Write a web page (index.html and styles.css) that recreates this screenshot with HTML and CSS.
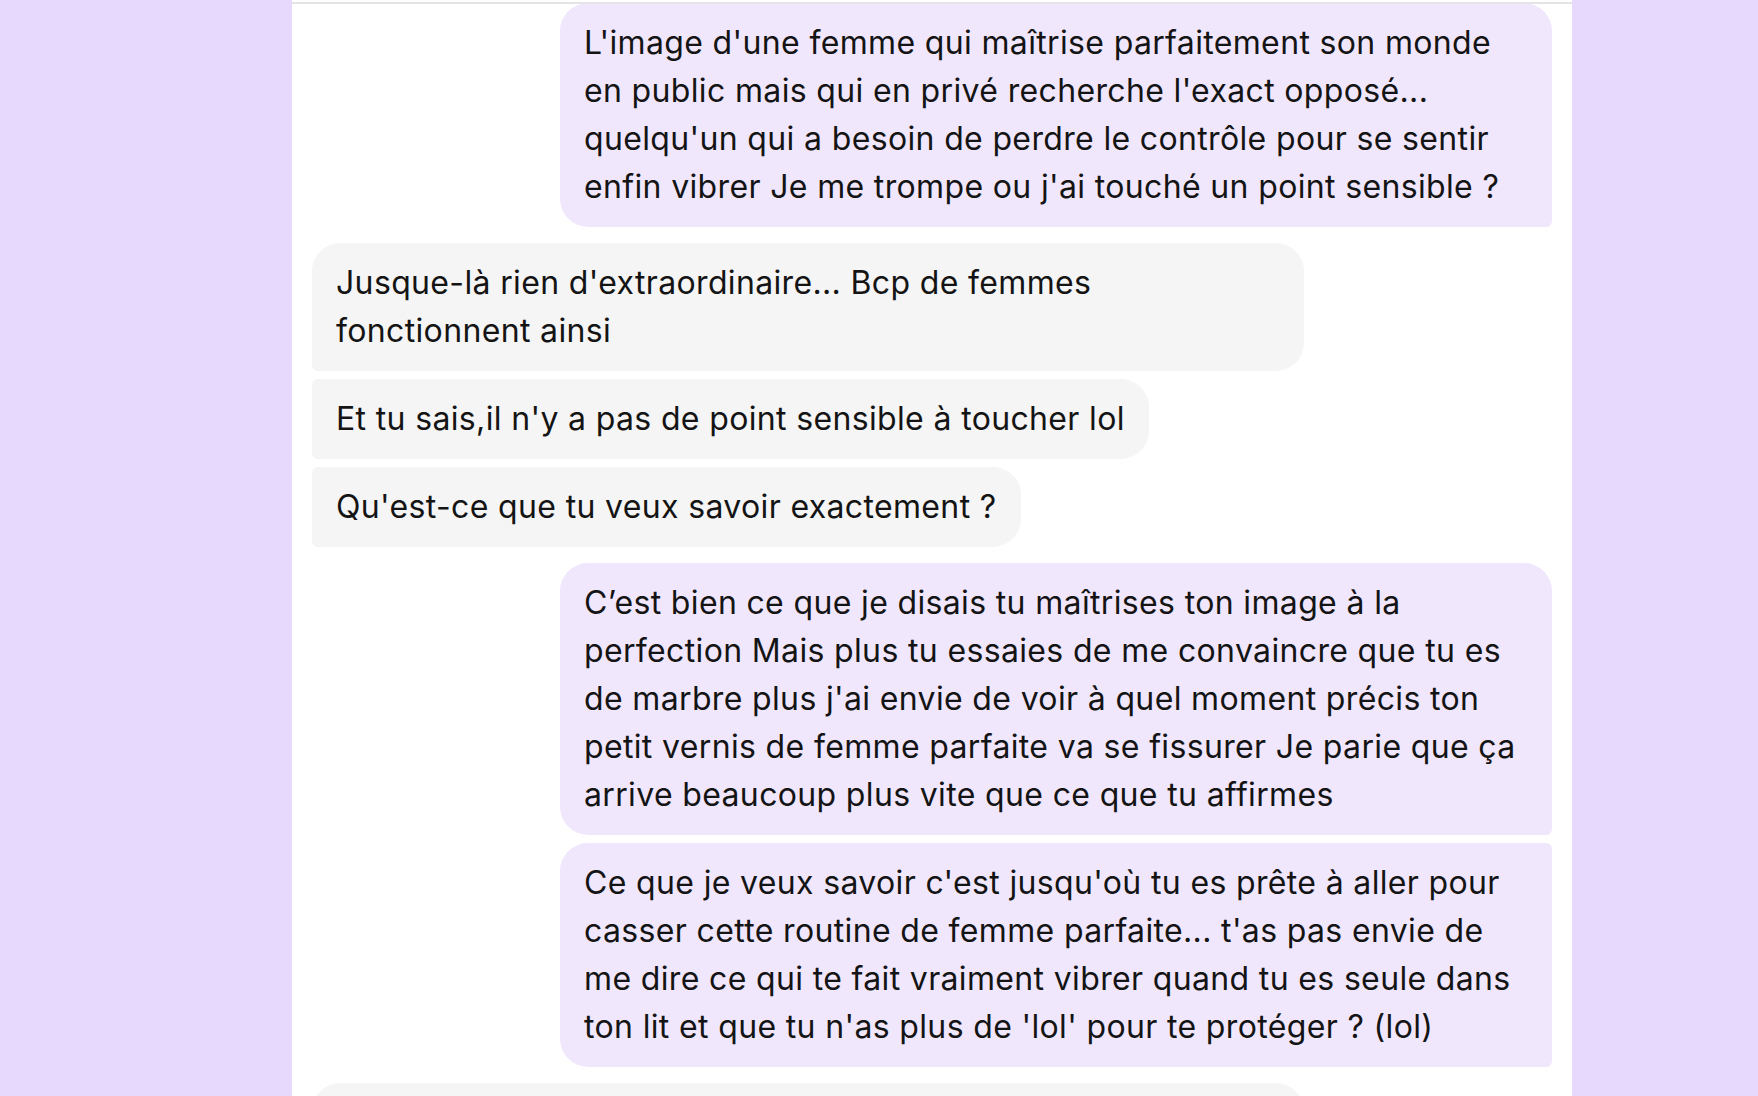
FILE: index.html
```html
<!DOCTYPE html>
<html lang="fr">
<head>
<meta charset="utf-8">
<title>Conversation</title>
<link rel="stylesheet" href="styles.css">
</head>
<body>
<div class="page">
  <main class="panel">
    <div class="header-line"></div>
    <div class="viewport">
      <div class="thread">
        <div class="group sent">
          <div class="bubble first">L'image d'une femme qui maîtrise parfaitement son monde en public mais qui en privé recherche l'exact opposé... quelqu'un qui a besoin de perdre le contrôle pour se sentir enfin vibrer Je me trompe ou j'ai touché un point sensible ?</div>
        </div>
        <div class="group received">
          <div class="bubble first">Jusque-là rien d'extraordinaire... Bcp de femmes fonctionnent ainsi</div>
          <div class="bubble">Et tu sais,il n'y a pas de point sensible à toucher lol</div>
          <div class="bubble">Qu'est-ce que tu veux savoir exactement ?</div>
        </div>
        <div class="group sent">
          <div class="bubble first">C’est bien ce que je disais tu maîtrises ton image à la perfection Mais plus tu essaies de me convaincre que tu es de marbre plus j'ai envie de voir à quel moment précis ton petit vernis de femme parfaite va se fissurer Je parie que ça arrive beaucoup plus vite que ce que tu affirmes</div>
          <div class="bubble">Ce que je veux savoir c'est jusqu'où tu es prête à aller pour casser cette routine de femme parfaite... t'as pas envie de me dire ce qui te fait vraiment vibrer quand tu es seule dans ton lit et que tu n'as plus de 'lol' pour te protéger ? (lol)</div>
        </div>
        <div class="group received">
          <div class="bubble first partial" aria-hidden="true"></div>
        </div>
      </div>
    </div>
  </main>
</div>
</body>
</html>
```
FILE: styles.css
```css
html, body {
  margin: 0;
  padding: 0;
  height: 100%;
}
body {
  background: #e7d8fe;
  font-family: Inter, "Noto Sans", "Liberation Sans", sans-serif;
  color: #141414;
  overflow: hidden;
}
.page {
  display: flex;
  height: 100%;
  padding-left: 292px;
}
.panel {
  width: 1280px;
  height: 100%;
  background: #ffffff;
  display: flex;
  flex-direction: column;
  position: relative;
}
.header-line {
  position: absolute;
  left: 0;
  right: 0;
  top: 2px;
  height: 2px;
  background: #e4e4e6;
  z-index: 2;
}
.viewport {
  flex: 1;
  overflow: hidden;
  padding: 0 20px;
}
.thread {
  display: flex;
  flex-direction: column;
  gap: 16px;
  margin-top: 3px;
}
.group {
  display: flex;
  flex-direction: column;
  gap: 8px;
}
.group.sent { align-items: flex-end; }
.group.received { align-items: flex-start; }
.bubble {
  max-width: 80%;
  box-sizing: border-box;
  padding: 16px 24px;
  font-size: 32px;
  line-height: 48px;
  letter-spacing: 0.35px;
}
.bubble.partial {
  width: 80%;
  height: 80px;
}
.sent .bubble {
  background: #f0e7fd;
  border-radius: 28px 6px 6px 28px;
}
.sent .bubble.first {
  border-radius: 28px 28px 6px 28px;
}
.received .bubble {
  background: #f5f5f5;
  border-radius: 6px 28px 28px 6px;
}
.received .bubble.first {
  border-radius: 28px 28px 28px 6px;
}
```
